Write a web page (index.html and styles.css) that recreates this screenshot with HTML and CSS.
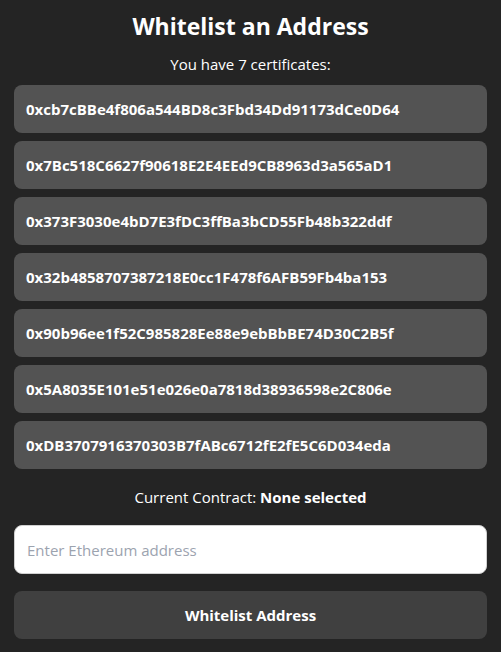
FILE: index.html
```html
<!DOCTYPE html>
<html>
<head>
<meta charset="utf-8">
<link rel="stylesheet" href="styles.css">
</head>
<body>
<main class="page">
  <h1 class="title">Whitelist an Address</h1>
  <p class="count">You have 7 certificates:</p>
  <ul class="certs">
    <li class="cert">0xcb7cBBe4f806a544BD8c3Fbd34Dd91173dCe0D64</li>
    <li class="cert">0x7Bc518C6627f90618E2E4EEd9CB8963d3a565aD1</li>
    <li class="cert">0x373F3030e4bD7E3fDC3ffBa3bCD55Fb48b322ddf</li>
    <li class="cert">0x32b4858707387218E0cc1F478f6AFB59Fb4ba153</li>
    <li class="cert">0x90b96ee1f52C985828Ee88e9ebBbBE74D30C2B5f</li>
    <li class="cert">0x5A8035E101e51e026e0a7818d38936598e2C806e</li>
    <li class="cert">0xDB3707916370303B7fABc6712fE2fE5C6D034eda</li>
  </ul>
  <p class="contract">Current Contract: <strong>None selected</strong></p>
  <input class="address" type="text" placeholder="Enter Ethereum address">
  <button class="submit">Whitelist Address</button>
</main>
</body>
</html>
```
FILE: styles.css
```css
html, body {
  margin: 0;
  padding: 0;
  background: #242424;
}
body {
  font-family: "Open Sans", "Noto Sans", sans-serif;
  color: #ffffff;
}
.page {
  display: flex;
  flex-direction: column;
  padding: 10px 14px 14px;
}
.title {
  margin: 0;
  text-align: center;
  font-size: 23px;
  font-weight: 700;
  line-height: 32px;
}
.count {
  margin: 12px 0 11px;
  text-align: center;
  font-size: 15px;
  line-height: 20px;
}
.certs {
  list-style: none;
  margin: 0;
  padding: 0;
  display: flex;
  flex-direction: column;
  gap: 8px;
}
.cert {
  height: 48px;
  box-sizing: border-box;
  display: flex;
  align-items: center;
  padding: 0 12px;
  background: #535353;
  border-radius: 8px;
  font-size: 15px;
  font-weight: 700;
}
.contract {
  margin: 18px 0 18px;
  text-align: center;
  font-size: 15px;
  line-height: 20px;
}
.contract strong {
  font-weight: 700;
}
.address {
  height: 49px;
  box-sizing: border-box;
  border: 1px solid #d0d0d0;
  border-radius: 8px;
  padding: 0 12px;
  font-family: inherit;
  font-size: 15px;
  color: #222;
  background: #fff;
  outline: none;
}
.address::placeholder {
  color: #9ca3af;
}
.submit {
  margin-top: 17px;
  height: 48px;
  border: none;
  border-radius: 8px;
  background: #404040;
  color: #fff;
  font-family: inherit;
  font-size: 15px;
  font-weight: 700;
}
```
